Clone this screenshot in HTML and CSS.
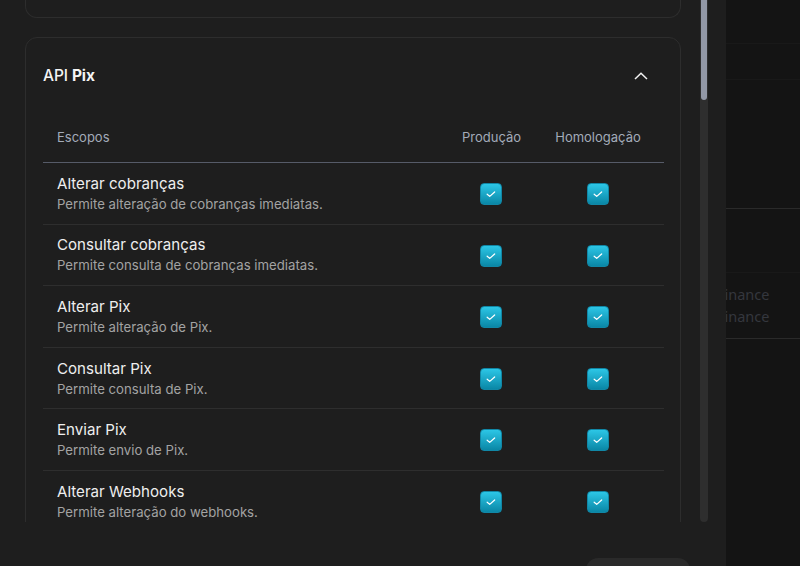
FILE: index.html
```html
<!DOCTYPE html>
<html lang="pt-BR">
<head>
<meta charset="utf-8">
<link rel="stylesheet" href="styles.css">
</head>
<body>
<div class="screen">
  <div class="panel">
    <div class="scroll-area">
      <div class="content">
        <div class="card card-prev"></div>
        <div class="card">
          <div class="card-head">
            <h2 class="card-title">API <b>Pix</b></h2>
            <svg class="chevron" width="14" height="8" viewBox="0 0 14 8"><polyline points="1,7 7,1.2 13,7" fill="none" stroke="#f2f2f2" stroke-width="1.5"/></svg>
          </div>
          <div class="table">
            <div class="thead">
              <div class="c-scope">Escopos</div>
              <div class="c-prod">Produção</div>
              <div class="c-hom">Homologação</div>
            </div>
            <div class="row">
              <div class="c-scope"><div class="r-title">Alterar cobranças</div><div class="r-desc">Permite alteração de cobranças imediatas.</div></div>
              <div class="c-prod"><span class="check"><svg viewBox="0 0 22 22"><polyline points="6.8,11.2 9.6,13.6 15,8.8"/></svg></span></div>
              <div class="c-hom"><span class="check"><svg viewBox="0 0 22 22"><polyline points="6.8,11.2 9.6,13.6 15,8.8"/></svg></span></div>
            </div>
            <div class="row">
              <div class="c-scope"><div class="r-title">Consultar cobranças</div><div class="r-desc">Permite consulta de cobranças imediatas.</div></div>
              <div class="c-prod"><span class="check"><svg viewBox="0 0 22 22"><polyline points="6.8,11.2 9.6,13.6 15,8.8"/></svg></span></div>
              <div class="c-hom"><span class="check"><svg viewBox="0 0 22 22"><polyline points="6.8,11.2 9.6,13.6 15,8.8"/></svg></span></div>
            </div>
            <div class="row">
              <div class="c-scope"><div class="r-title">Alterar Pix</div><div class="r-desc">Permite alteração de Pix.</div></div>
              <div class="c-prod"><span class="check"><svg viewBox="0 0 22 22"><polyline points="6.8,11.2 9.6,13.6 15,8.8"/></svg></span></div>
              <div class="c-hom"><span class="check"><svg viewBox="0 0 22 22"><polyline points="6.8,11.2 9.6,13.6 15,8.8"/></svg></span></div>
            </div>
            <div class="row">
              <div class="c-scope"><div class="r-title">Consultar Pix</div><div class="r-desc">Permite consulta de Pix.</div></div>
              <div class="c-prod"><span class="check"><svg viewBox="0 0 22 22"><polyline points="6.8,11.2 9.6,13.6 15,8.8"/></svg></span></div>
              <div class="c-hom"><span class="check"><svg viewBox="0 0 22 22"><polyline points="6.8,11.2 9.6,13.6 15,8.8"/></svg></span></div>
            </div>
            <div class="row">
              <div class="c-scope"><div class="r-title">Enviar Pix</div><div class="r-desc">Permite envio de Pix.</div></div>
              <div class="c-prod"><span class="check"><svg viewBox="0 0 22 22"><polyline points="6.8,11.2 9.6,13.6 15,8.8"/></svg></span></div>
              <div class="c-hom"><span class="check"><svg viewBox="0 0 22 22"><polyline points="6.8,11.2 9.6,13.6 15,8.8"/></svg></span></div>
            </div>
            <div class="row">
              <div class="c-scope"><div class="r-title">Alterar Webhooks</div><div class="r-desc">Permite alteração do webhooks.</div></div>
              <div class="c-prod"><span class="check"><svg viewBox="0 0 22 22"><polyline points="6.8,11.2 9.6,13.6 15,8.8"/></svg></span></div>
              <div class="c-hom"><span class="check"><svg viewBox="0 0 22 22"><polyline points="6.8,11.2 9.6,13.6 15,8.8"/></svg></span></div>
            </div>
          </div>
        </div>
      </div>
      <div class="scrollbar"><div class="thumb"></div></div>
    </div>
    <div class="footer">
      <button class="btn" aria-label="Salvar"></button>
    </div>
  </div>
  <div class="backdrop">
    <div class="b-row b-h43 b-line-faint"></div>
    <div class="b-row b-h36 b-line-faint"></div>
    <div class="b-row b-h129 b-line"></div>
    <div class="b-row b-h64 b-line-faint"></div>
    <div class="b-row b-h65 b-line b-text">
      <span>Finance</span>
      <span>Finance</span>
    </div>
    <div class="b-row b-rest"></div>
  </div>
</div>
</body>
</html>
```

FILE: styles.css
```css
* { box-sizing: border-box; }
html, body { margin: 0; padding: 0; }
body {
  width: 800px;
  height: 566px;
  overflow: hidden;
  background: #141414;
  font-family: Inter, "Noto Sans", "Liberation Sans", sans-serif;
  color: #ececec;
}
.screen {
  display: flex;
  width: 800px;
  height: 566px;
}
.panel {
  width: 726px;
  height: 566px;
  background: #1e1e1e;
  display: flex;
  flex-direction: column;
  flex: none;
}
.scroll-area {
  height: 522px;
  display: flex;
  flex: none;
}
.content {
  width: 700px;
  height: 522px;
  overflow: hidden;
  padding-left: 25px;
  padding-right: 19px;
  display: flex;
  flex-direction: column;
  gap: 19px;
}
.scrollbar {
  width: 8px;
  height: 522px;
  background: #2e2e2e;
  border-radius: 0 0 4px 4px;
  padding: 0 1px;
}
.thumb {
  height: 100px;
  background: #9298a6;
  border-radius: 0 0 4px 4px;
}
.card {
  border: 1px solid #2d2d2d;
  border-radius: 12px;
  background: #1e1e1e;
  flex: none;
}
.card-prev {
  height: 18px;
  border-top: none;
  border-radius: 0 0 12px 12px;
}
.card-head {
  display: flex;
  align-items: center;
  justify-content: space-between;
  padding: 26px 32px 24px 17px;
}
.card-title {
  margin: 0;
  font-size: 15.5px;
  line-height: 24px;
  font-weight: 500;
  color: #f4f4f4;
  letter-spacing: -0.1px;
}
.card-title b { font-weight: 700; }
.chevron { display: block; }
.table {
  margin: 0 16px 0 17px;
}
.thead, .row {
  display: flex;
  align-items: center;
}
.thead {
  padding: 16px 0 16px;
  border-bottom: 1px solid #565b68;
  font-size: 13px;
  line-height: 18px;
  color: #a3abb9;
}
.row {
  border-bottom: 1px solid #2e2e2e;
  padding: 10.8px 0 9.8px;
}
.c-scope { flex: 1; padding-left: 14px; }
.c-prod { width: 82px; text-align: center; }
.c-hom { width: 132px; text-align: center; }
.thead .c-prod { padding-left: 1px; }
.r-title {
  font-size: 15.1px;
  line-height: 20px;
  color: #eeeeee;
  font-weight: 400;
}
.r-desc {
  font-size: 13.2px;
  line-height: 20px;
  color: #a3a3a3;
}
.check {
  display: inline-block;
  width: 22px;
  height: 22px;
  border-radius: 4px;
  border: 1px solid #1187a6;
  background: linear-gradient(#2cc6e6, #0a87a6);
  vertical-align: middle;
}
.check svg {
  display: block;
  width: 20px;
  height: 20px;
  fill: none;
  stroke: #ffffff;
  stroke-width: 1.4;
  stroke-linecap: round;
  stroke-linejoin: round;
}
.footer {
  flex: 1;
  display: flex;
  justify-content: flex-end;
  padding: 36px 36px 0 0;
  overflow: hidden;
}
.btn {
  width: 104px;
  height: 40px;
  border: none;
  border-radius: 12px;
  background: #2a2a2a;
  flex: none;
}
.backdrop {
  flex: 1;
  overflow: hidden;
  display: flex;
  flex-direction: column;
}
.b-row { flex: none; }
.b-h43 { height: 44px; }
.b-h36 { height: 36px; }
.b-h129 { height: 129px; }
.b-h64 { height: 64px; }
.b-h65 { height: 66px; }
.b-rest { flex: 1; }
.b-line { border-bottom: 1px solid #2a2a2a; }
.b-line-faint { border-bottom: 1px solid #191919; }
.b-text {
  display: flex;
  flex-direction: column;
  padding-top: 10px;
  margin-left: -9px;
  font-family: "Noto Sans", "Liberation Sans", sans-serif;
  font-size: 14.5px;
  line-height: 22px;
  color: #34373e;
}
```
